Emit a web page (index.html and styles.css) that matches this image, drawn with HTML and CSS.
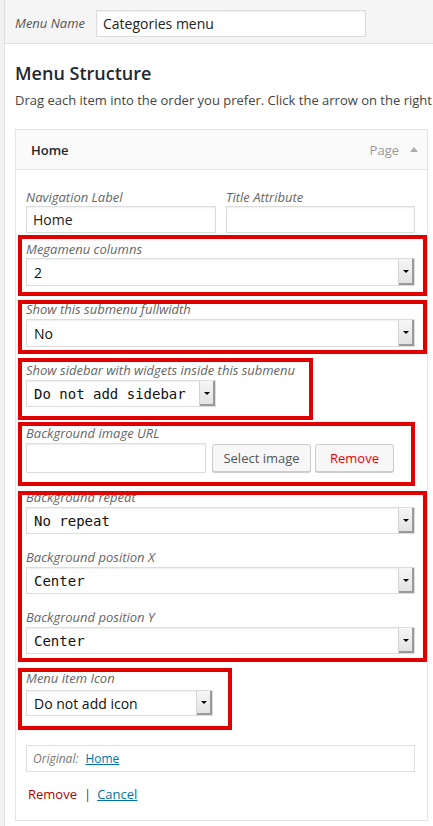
FILE: index.html
```html
<!DOCTYPE html>
<html>
<head>
<meta charset="utf-8">
<link rel="stylesheet" href="styles.css">
</head>
<body>
<div class="wrap">
  <div class="topbar">
    <span class="menu-name-label">Menu Name</span>
    <div class="text-input menu-name">Categories menu</div>
  </div>
  <div class="content">
    <h2 class="title">Menu Structure</h2>
    <p class="desc">Drag each item into the order you prefer. Click the arrow on the right</p>

    <div class="item">
      <div class="item-head">
        <span class="item-title">Home</span>
        <span class="item-type">Page</span>
        <span class="item-arrow"></span>
      </div>
      <div class="item-body">
        <div class="nav-row">
          <div>
            <div class="lbl lbl-nav">Navigation Label</div>
            <div class="text-input nav-input">Home</div>
          </div>
          <div>
            <div class="lbl lbl-nav">Title Attribute</div>
            <div class="text-input nav-input"></div>
          </div>
        </div>

        <div class="hl hl-1">
          <div class="lbl">Megamenu columns</div>
          <div class="sel sel-full sel-sans"><span class="sel-text">2</span><span class="sel-btn"></span></div>
        </div>

        <div class="hl hl-2">
          <div class="lbl">Show this submenu fullwidth</div>
          <div class="sel sel-full sel-sans"><span class="sel-text">No</span><span class="sel-btn"></span></div>
        </div>

        <div class="hl hl-3">
          <div class="lbl">Show sidebar with widgets inside this submenu</div>
          <div class="sel sel-sidebar sel-mono"><span class="sel-text">Do not add sidebar</span><span class="sel-btn"></span></div>
        </div>

        <div class="hl hl-4">
          <div class="lbl">Background image URL</div>
          <div class="img-row">
            <div class="text-input url-input"></div>
            <span class="btn btn-select">Select image</span>
            <span class="btn btn-remove">Remove</span>
          </div>
        </div>

        <div class="hl hl-5">
          <div class="lbl">Background repeat</div>
          <div class="sel sel-full sel-mono"><span class="sel-text">No repeat</span><span class="sel-btn"></span></div>
          <div class="lbl lbl-next">Background position X</div>
          <div class="sel sel-full sel-mono"><span class="sel-text">Center</span><span class="sel-btn"></span></div>
          <div class="lbl lbl-next">Background position Y</div>
          <div class="sel sel-full sel-mono"><span class="sel-text">Center</span><span class="sel-btn"></span></div>
        </div>

        <div class="hl hl-6">
          <div class="lbl">Menu item Icon</div>
          <div class="sel sel-icon sel-sans"><span class="sel-text">Do not add icon</span><span class="sel-btn"></span></div>
        </div>

        <div class="original">
          <span class="orig-label">Original:</span>
          <a class="link" href="#">Home</a>
        </div>

        <div class="actions">
          <a class="link-remove" href="#">Remove</a>
          <span class="sep">|</span>
          <a class="link" href="#">Cancel</a>
        </div>
      </div>
    </div>
  </div>
</div>
</body>
</html>
```

FILE: styles.css
```css
html, body {
  margin: 0;
  padding: 0;
}
body {
  background: #f1f1f1;
  font-family: "Open Sans", "Liberation Sans", sans-serif;
  color: #444;
  width: 433px;
  height: 826px;
  overflow: hidden;
}
.wrap {
  margin-left: 4px;
  border-left: 1px solid #e0e0e0;
  background: #fff;
  height: 826px;
}
.topbar {
  height: 44px;
  box-sizing: border-box;
  background: #f5f5f5;
  border-bottom: 1px solid #dfdfdf;
  padding: 10px 0 0 10px;
  display: flex;
  align-items: flex-start;
}
.menu-name-label {
  width: 81px;
  font-style: italic;
  font-size: 13px;
  line-height: 27px;
  color: #555;
}
.text-input {
  box-sizing: border-box;
  background: #fff;
  border: 1px solid #ddd;
  box-shadow: inset 0 1px 2px rgba(0,0,0,0.07);
  font-size: 14px;
  color: #222;
  padding: 0 6px;
}
.menu-name {
  width: 270px;
  height: 27px;
  line-height: 25px;
}
.content {
  padding: 0 0 0 10px;
}
.title {
  margin: 17px 0 0;
  font-size: 18px;
  line-height: 24px;
  font-weight: 600;
  color: #23282d;
}
.desc {
  margin: 5px 0 0;
  font-size: 13px;
  line-height: 20px;
  white-space: nowrap;
  color: #444;
}
.item {
  margin-top: 19px;
  width: 413px;
  box-sizing: border-box;
  border: 1px solid #e5e5e5;
  background: #fff;
}
.item-head {
  height: 40px;
  box-sizing: border-box;
  border-bottom: 1px solid #e5e5e5;
  background: #fafafa;
  display: flex;
  align-items: center;
  padding: 0 9px 0 15px;
}
.item-title {
  font-weight: 600;
  font-size: 13px;
  color: #23282d;
  flex: 1;
}
.item-type {
  font-size: 13px;
  color: #999;
  margin-right: 11px;
}
.item-arrow {
  width: 0;
  height: 0;
  border-left: 4.5px solid transparent;
  border-right: 4.5px solid transparent;
  border-bottom: 5px solid #a8adb2;
  margin-top: -1px;
}
.item-body {
  padding: 19px 12px 18px 10px;
}
.lbl {
  font-style: italic;
  font-size: 13px;
  line-height: 16px;
  height: 16px;
  color: #666;
  white-space: nowrap;
}
.nav-row {
  display: grid;
  grid-template-columns: 190px 189px;
  column-gap: 10px;
}
.lbl-nav {
  margin-bottom: 1px;
}
.nav-input {
  height: 27px;
  line-height: 25px;
}
.hl {
  display: flow-root;
  outline: 4px solid #e10000;
  margin-left: -4px;
  padding-left: 4px;
  box-sizing: border-box;
}
.hl-1 {
  width: 401px;
  margin-top: 6px;
  padding-top: 2px;
  padding-bottom: 6px;
}
.hl-1 .sel { margin-top: 1px; }
.hl-2 {
  width: 401px;
  margin-top: 12px;
  padding-bottom: 3px;
}
.hl-2 .lbl { margin-top: -3px; }
.hl-2 .sel { margin-top: 2px; }
.hl-3 {
  width: 287px;
  margin-top: 12px;
  padding-bottom: 9px;
}
.hl-3 .sel { margin-top: 2px; height: 27px; }
.hl-4 {
  width: 389px;
  margin-top: 10px;
  padding-bottom: 9px;
}
.hl-4 .lbl { margin-top: -1px; }
.hl-5 {
  width: 401px;
  margin-top: 13px;
  padding-bottom: 4px;
}
.hl-5 > .lbl:first-child { margin-top: -6px; }
.hl-5 .sel { margin-top: 2px; height: 27px; }
.hl-5 .lbl-next { margin-top: 15px; }
.hl-6 {
  width: 206px;
  margin-top: 14px;
  padding-bottom: 10px;
}
.hl-6 .lbl { margin-top: -2px; }
.hl-6 .sel { margin-top: 4px; height: 26px; }

.sel {
  box-sizing: border-box;
  height: 28px;
  border: 1px solid #ddd;
  background: #fff;
  box-shadow: inset 0 1px 2px rgba(0,0,0,0.07);
  display: flex;
  align-items: center;
  color: #111;
}
.sel-text {
  flex: 1;
  padding-left: 7px;
  white-space: nowrap;
}
.sel-sans {
  font-family: "Open Sans", "Liberation Sans", sans-serif;
  font-size: 14px;
}
.sel-mono {
  font-family: "DejaVu Sans Mono", "Liberation Mono", monospace;
  font-size: 14px;
}
.sel-full { width: 389px; }
.sel-sidebar { width: 190px; }
.sel-icon { width: 187px; }
.sel-btn {
  align-self: stretch;
  width: 13px;
  background: linear-gradient(#f6f6f6, #e2e2e2);
  border-left: 1px solid #d4d4d4;
  box-shadow: inset -2px -2px 0 #9a9a9a;
  display: flex;
  align-items: center;
  justify-content: center;
  padding-right: 2px;
}
.sel-btn::after {
  content: "";
  width: 0;
  height: 0;
  border-left: 3px solid transparent;
  border-right: 3px solid transparent;
  border-top: 3px solid #000;
  margin-top: -1px;
}
.img-row {
  display: flex;
  align-items: flex-start;
  margin-top: 2px;
}
.url-input {
  width: 180px;
  height: 30px;
}
.btn {
  box-sizing: border-box;
  height: 28px;
  line-height: 26px;
  margin-top: 1px;
  border: 1px solid #ccc;
  border-radius: 3px;
  background: #f7f7f7;
  box-shadow: 0 1px 0 #ccc;
  font-size: 13px;
  text-align: center;
}
.btn-select {
  width: 99px;
  margin-left: 6px;
  color: #555;
}
.btn-remove {
  width: 79px;
  margin-left: 4px;
  color: #e00;
}
.original {
  margin-top: 19px;
  box-sizing: border-box;
  width: 389px;
  height: 27px;
  border: 1px solid #dfdfdf;
  padding-left: 6px;
  display: flex;
  align-items: center;
  font-size: 12px;
}
.orig-label {
  font-style: italic;
  color: #777;
  margin-right: 7px;
}
.link {
  color: #0073aa;
  text-decoration: underline;
}
.original .link {
  font-size: 12px;
}
.actions {
  margin-top: 14px;
  font-size: 13px;
  line-height: 16px;
  padding-left: 2px;
  display: flex;
  align-items: center;
}
.link-remove {
  color: #a00;
  text-decoration: none;
}
.sep {
  color: #444;
  margin: 0 6px 0 7px;
}
```
